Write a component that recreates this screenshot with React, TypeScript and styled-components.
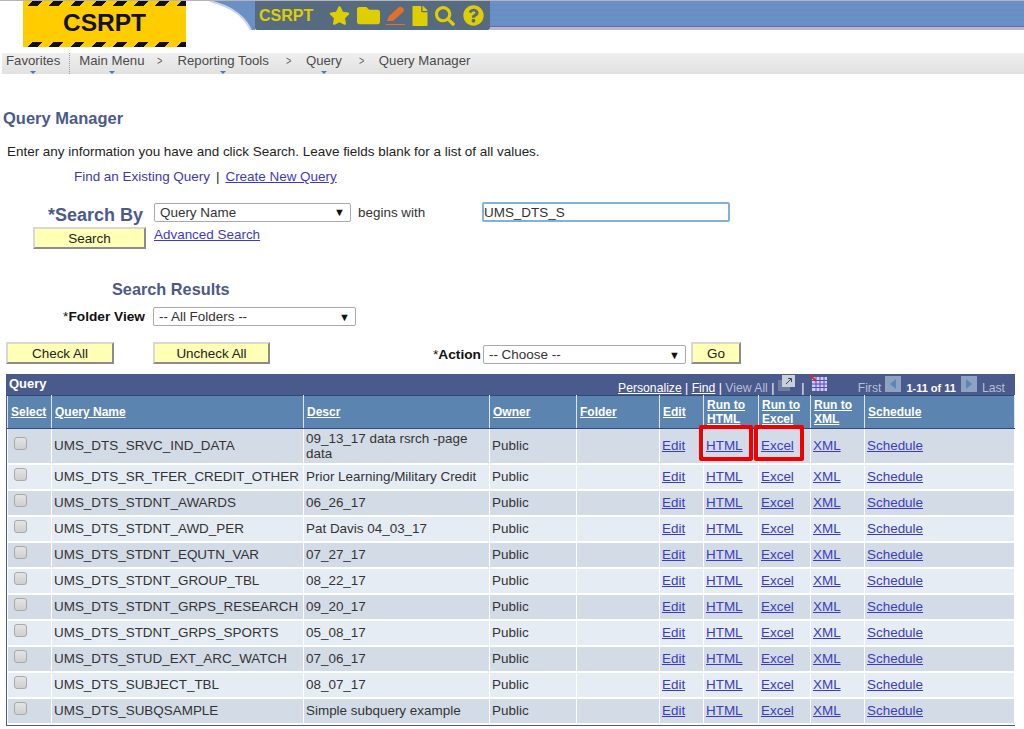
import styled, { createGlobalStyle } from "styled-components";
import { FaStar, FaFolder, FaFile, FaSearch, FaQuestionCircle } from "react-icons/fa";

const GlobalStyle = createGlobalStyle`
  html, body {
    margin: 0;
    padding: 0;
    background: #fff;
    font-family: "Liberation Sans", Arial, sans-serif;
    font-size: 13.45px;
    color: #333;
  }
`;

const Page = styled.div`
  width: 1024px;
  height: 729px;
  overflow: hidden;
  border-top: 1px solid #b5b5b5;
  box-sizing: border-box;
`;

/* banner */
const Header = styled.header`
  display: flex;
  align-items: flex-start;
  height: 46px;
  padding-left: 23px;
`;

const Logo = styled.div`
  display: flex;
  flex-direction: column;
  justify-content: space-between;
  width: 163px;
  height: 46px;
  background: #ffcc00;
`;

const HazardStrip = styled.div`
  height: 5px;
  background: repeating-linear-gradient(-45deg, #111 0 7px, #ffcc00 7px 15px);
`;

const LogoText = styled.div`
  margin-top: -2px;
  font-size: 24.5px;
  line-height: 30px;
  font-weight: 700;
  color: #111;
  text-align: center;
`;

const Swoosh = styled.svg`
  display: block;
  flex: none;
  width: 69px;
  height: 29px;
`;

const Toolbar = styled.div`
  display: flex;
  align-items: center;
  flex: none;
  width: 235px;
  height: 29px;
  box-sizing: border-box;
  padding-left: 4px;
  background: #566b80;
  border-radius: 0 0 2px 2px;
  color: #dfcf00;
`;

const ToolbarTitle = styled.span`
  width: 67px;
  font-size: 16px;
  font-weight: 700;
`;

const ToolIcon = styled.span<{ $w: number }>`
  display: flex;
  align-items: center;
  justify-content: center;
  width: ${(p) => p.$w}px;
  color: #dfcf00;
`;

const BannerFill = styled.div`
  flex: 1;
  height: 29px;
  box-sizing: border-box;
  border-bottom: 3px solid #b9b9c4;
  background: repeating-linear-gradient(180deg, #6b90c6 0 3px, #688dc3 3px 5px);
  box-shadow: inset 0 -1px 0 #6a66b8;
`;

/* breadcrumb */
const NavBar = styled.nav`
  display: flex;
  align-items: flex-start;
  height: 21px;
  margin: 6px 0 0 2px;
  padding-left: 4px;
  background: linear-gradient(180deg, #efefef, #e1e1e1);
  font-size: 13.2px;
  line-height: 16px;
  color: #4a4a4a;
`;

const NavItem = styled.span<{ $caret?: boolean; $gap: number }>`
  position: relative;
  height: 21px;
  margin-right: ${(p) => p.$gap}px;

  &::after {
    content: "";
    display: ${(p) => (p.$caret ? "block" : "none")};
    position: absolute;
    left: 50%;
    bottom: 0;
    margin-left: -3px;
    border: 3px solid transparent;
    border-bottom: 0;
    border-top: 3px solid #3f7cc0;
  }
`;

const NavRule = styled.span`
  width: 0;
  height: 21px;
  margin-right: 9px;
  border-left: 1px dotted #9a9a9a;
`;

const NavSep = styled.span`
  width: 6px;
  margin: 0 15px 0 12px;
  font-size: 13px;
  color: #666;
  transform: scaleX(0.7);
`;

/* search form */
const PageTitle = styled.h1`
  margin: 35px 0 0 3px;
  font-size: 16.5px;
  line-height: 18px;
  font-weight: 700;
  color: #4b5a88;
`;

const Intro = styled.p`
  margin: 16px 0 0 7px;
  font-size: 13.45px;
  line-height: 17px;
  color: #222;
`;

const TabLinks = styled.div`
  display: flex;
  gap: 6px;
  margin: 8px 0 0 74px;
  line-height: 17px;
`;

const PlainTab = styled.span`
  color: #3a3aa8;
`;

const Pipe = styled.span`
  color: #222;
`;

const Link = styled.a`
  color: #3b3bc0;
  text-decoration: underline;
  cursor: pointer;
`;

const SearchGrid = styled.div`
  display: grid;
  grid-template-columns: 121px 197px 131px 248px;
  grid-template-rows: 20px 27px;
  align-items: center;
  margin: 17px 0 0 33px;
`;

const SearchLabel = styled.div`
  padding: 6px 11px 0 0;
  font-size: 18px;
  line-height: 18px;
  font-weight: 700;
  color: #4b5a88;
  text-align: right;
`;

const Select = styled.div<{ $w: number }>`
  display: flex;
  align-items: center;
  justify-content: space-between;
  width: ${(p) => p.$w}px;
  height: 19px;
  box-sizing: border-box;
  padding: 0 5px;
  background: #fff;
  border: 1px solid #a9a9a9;
  border-radius: 2px;
  font-size: 13.45px;
  color: #333;

  &::after {
    content: "▼";
    font-size: 11px;
    color: #111;
  }
`;

const BeginsWith = styled.span`
  padding-left: 7px;
  color: #333;
`;

const TextInput = styled.input`
  width: 248px;
  height: 20px;
  box-sizing: border-box;
  padding: 0;
  border: 2px solid #7fb2dd;
  border-radius: 2px;
  outline: none;
  font-family: inherit;
  font-size: 13.45px;
  color: #333;
`;

const Button = styled.button<{ $w: number }>`
  width: ${(p) => p.$w}px;
  height: 22px;
  padding: 0;
  background: #ffffb5;
  border: 2px solid;
  border-color: #d8d8d8 #8c8c8c #8c8c8c #d8d8d8;
  font-family: inherit;
  font-size: 13.45px;
  color: #222;
`;

const SearchButton = styled(Button)`
  align-self: end;
`;

const AdvancedLink = styled(Link)`
  grid-column: 2 / 4;
  align-self: start;
  margin-top: 4px;
  line-height: 17px;
`;

const ResultsTitle = styled.h2`
  margin: 31px 0 0 112px;
  font-size: 16.3px;
  line-height: 18px;
  font-weight: 700;
  color: #4b5a88;
`;

const FolderRow = styled.div`
  display: grid;
  grid-template-columns: 145px 203px;
  column-gap: 8px;
  align-items: center;
  margin-top: 9px;
`;

const FieldLabel = styled.label`
  font-size: 13.7px;
  font-weight: 700;
  color: #111;
  text-align: right;
`;

const Req = styled.span`
  font-weight: 400;
`;

const ActionRow = styled.div`
  display: flex;
  align-items: flex-start;
  margin: 16px 0 0 6px;
`;

const CheckAllWrap = styled.div`
  width: 147px;
`;

const UncheckWrap = styled.div`
  width: 280px;
`;

const ActionField = styled.div`
  display: flex;
  align-items: center;
  gap: 2px;
  margin: 3px 5px 0 0;
`;

/* grid */
const GridBox = styled.div`
  width: 1009px;
  margin: 10px 0 0 6px;
  box-sizing: border-box;
  background: #4a5a8c;
  border: 1px solid #4a5a8c;
  border-top: 0;
`;

const GridCaption = styled.div`
  display: flex;
  align-items: flex-start;
  justify-content: space-between;
  height: 21px;
  padding: 0 9px 0 2px;
  color: #fff;
`;

const CaptionTitle = styled.span`
  font-size: 13px;
  line-height: 20px;
  font-weight: 700;
`;

const CaptionTools = styled.div`
  display: flex;
  align-items: center;
  height: 21px;
  padding-top: 7px;
  box-sizing: border-box;
  font-size: 12.2px;
  color: #fff;
`;

const ToolLink = styled.span`
  text-decoration: underline;
`;

const ToolText = styled.span<{ $dim?: boolean; $bold?: boolean; $gap?: number }>`
  margin-left: ${(p) => p.$gap ?? 0}px;
  font-weight: ${(p) => (p.$bold ? 700 : 400)};
  font-size: ${(p) => (p.$bold ? "11px" : "inherit")};
  color: ${(p) => (p.$dim ? "#b6bfd6" : "#fff")};
  white-space: pre;
`;

const NavSquare = styled.span<{ $dir: "l" | "r"; $gap: number }>`
  display: flex;
  align-items: center;
  justify-content: center;
  width: 16px;
  height: 16px;
  margin: -8px 5px 0 ${(p) => p.$gap}px;
  background: #8ea3c4;

  &::after {
    content: "";
    border: 5px solid transparent;
    ${(p) => (p.$dir === "l" ? "border-left: 0; border-right: 6px solid #5d86b4;" : "border-right: 0; border-left: 6px solid #5d86b4;")}
  }
`;

const ToolGlyph = styled.svg<{ $left?: number }>`
  display: block;
  margin: -10px 0 0 ${(p) => p.$left ?? 0}px;
`;

const Table = styled.table`
  width: 1007px;
  table-layout: fixed;
  border-collapse: collapse;
  font-size: 13.45px;
`;

const HeadCell = styled.th`
  height: 33px;
  padding: 0 0 0 3px;
  box-sizing: border-box;
  background: #5b84b1;
  border: 1px solid;
  border-color: #2f4a78 #dfe5ef #2f4a78 #dfe5ef;
  font-size: 12px;
  line-height: 14px;
  font-weight: 700;
  color: #fff;
  text-align: left;
  text-decoration: underline;
`;

const Row = styled.tr<{ $odd: boolean }>`
  background: ${(p) => (p.$odd ? "#d3dbe7" : "#e6ecf3")};
`;

const Cell = styled.td<{ $tall?: boolean }>`
  position: relative;
  height: ${(p) => (p.$tall ? 35 : 26)}px;
  padding: 0 0 0 2px;
  box-sizing: border-box;
  border: 2px solid #fff;
  border-width: 0 1px 2px 1px;
  font-size: 13.45px;
  line-height: 15px;
  color: #333;
`;

const CheckCell = styled(Cell)`
  padding: 0 0 4px 6px;
`;

const Check = styled.input.attrs({ type: "checkbox" })`
  appearance: none;
  display: block;
  width: 13px;
  height: 13px;
  margin: 0;
  background: linear-gradient(180deg, #e4e4e4, #cfcfcf);
  border: 1px solid #a8a8a8;
  border-radius: 3px;
`;

const Callout = styled.span<{ $w: number; $left: number }>`
  position: absolute;
  top: -4px;
  left: ${(p) => p.$left}px;
  width: ${(p) => p.$w}px;
  height: 36px;
  box-sizing: border-box;
  border: 4px solid #f00000;
  border-radius: 2px;
  pointer-events: none;
`;

const rows = [
  ["UMS_DTS_SRVC_IND_DATA", "09_13_17 data rsrch -page data"],
  ["UMS_DTS_SR_TFER_CREDIT_OTHER", "Prior Learning/Military Credit"],
  ["UMS_DTS_STDNT_AWARDS", "06_26_17"],
  ["UMS_DTS_STDNT_AWD_PER", "Pat Davis 04_03_17"],
  ["UMS_DTS_STDNT_EQUTN_VAR", "07_27_17"],
  ["UMS_DTS_STDNT_GROUP_TBL", "08_22_17"],
  ["UMS_DTS_STDNT_GRPS_RESEARCH", "09_20_17"],
  ["UMS_DTS_STDNT_GRPS_SPORTS", "05_08_17"],
  ["UMS_DTS_STUD_EXT_ARC_WATCH", "07_06_17"],
  ["UMS_DTS_SUBJECT_TBL", "08_07_17"],
  ["UMS_DTS_SUBQSAMPLE", "Simple subquery example"],
];

const columns: [string, number][] = [
  ["Select", 44],
  ["Query Name", 252],
  ["Descr", 186],
  ["Owner", 87],
  ["Folder", 83],
  ["Edit", 44],
  ["Run to HTML", 55],
  ["Run to Excel", 52],
  ["Run to XML", 54],
  ["Schedule", 150],
];

export default function App() {
  return (
    <Page>
      <GlobalStyle />
      <Header>
        <Logo>
          <HazardStrip />
          <LogoText>CSRPT</LogoText>
          <HazardStrip />
        </Logo>
        <Swoosh viewBox="0 0 69 29">
          <path d="M24 0 C38 4 56 10 65 29 L69 29 L69 0 Z" fill="#6b90c6" />
          <path d="M24 0 C38 4 56 10 65 29" stroke="#c9d2e6" strokeWidth="2" fill="none" />
        </Swoosh>
        <Toolbar>
          <ToolbarTitle>CSRPT</ToolbarTitle>
          <ToolIcon $w={26}><FaStar size={21} /></ToolIcon>
          <ToolIcon $w={32}><FaFolder size={23} /></ToolIcon>
          <ToolIcon $w={24}>
            <svg width="20" height="20" viewBox="0 0 20 20">
              <path d="M1 15 L3 10 L13 1 Q15 0 17 2 Q19 4 17 6 L7 15 Z" fill="#e0702a" />
              <rect x="0" y="18" width="19" height="1" fill="#e0702a" />
            </svg>
          </ToolIcon>
          <ToolIcon $w={24}><FaFile size={20} /></ToolIcon>
          <ToolIcon $w={26}><FaSearch size={20} /></ToolIcon>
          <ToolIcon $w={30}><FaQuestionCircle size={21} /></ToolIcon>
        </Toolbar>
        <BannerFill />
      </Header>

      <NavBar>
        <NavItem $caret $gap={9}>Favorites</NavItem>
        <NavRule />
        <NavItem $caret $gap={0}>Main Menu</NavItem>
        <NavSep>&gt;</NavSep>
        <NavItem $caret $gap={4}>Reporting Tools</NavItem>
        <NavSep>&gt;</NavSep>
        <NavItem $caret $gap={4}>Query</NavItem>
        <NavSep>&gt;</NavSep>
        <NavItem $gap={0}>Query Manager</NavItem>
      </NavBar>

      <PageTitle>Query Manager</PageTitle>
      <Intro>Enter any information you have and click Search. Leave fields blank for a list of all values.</Intro>
      <TabLinks>
        <PlainTab>Find an Existing Query</PlainTab>
        <Pipe>|</Pipe>
        <Link>Create New Query</Link>
      </TabLinks>

      <SearchGrid>
        <SearchLabel>*Search By</SearchLabel>
        <Select $w={197}>Query Name</Select>
        <BeginsWith>begins with</BeginsWith>
        <TextInput defaultValue="UMS_DTS_S" />
        <SearchButton $w={113}>Search</SearchButton>
        <AdvancedLink>Advanced Search</AdvancedLink>
      </SearchGrid>

      <ResultsTitle>Search Results</ResultsTitle>
      <FolderRow>
        <FieldLabel><Req>*</Req>Folder View</FieldLabel>
        <Select $w={203}>-- All Folders --</Select>
      </FolderRow>

      <ActionRow>
        <CheckAllWrap><Button $w={108}>Check All</Button></CheckAllWrap>
        <UncheckWrap><Button $w={117}>Uncheck All</Button></UncheckWrap>
        <ActionField>
          <FieldLabel><Req>*</Req>Action</FieldLabel>
          <Select $w={203}>-- Choose --</Select>
        </ActionField>
        <Button $w={50}>Go</Button>
      </ActionRow>

      <GridBox>
        <GridCaption>
          <CaptionTitle>Query</CaptionTitle>
          <CaptionTools>
            <ToolLink>Personalize</ToolLink>
            <ToolText> | </ToolText>
            <ToolLink>Find</ToolLink>
            <ToolText> | </ToolText>
            <ToolText $dim>View All</ToolText>
            <ToolText> | </ToolText>
            <ToolGlyph width="17" height="16" viewBox="0 0 17 16">
              <rect x="0" y="5" width="12" height="11" fill="#6f7f9f" />
              <rect x="4" y="0" width="13" height="12" fill="#c9cfdc" />
              <path d="M8 9 L13 4 M10 3.5 h3.5 v3.5" stroke="#3b4660" fill="none" />
            </ToolGlyph>
            <ToolText $gap={3}> | </ToolText>
            <ToolGlyph $left={2} width="17" height="16" viewBox="0 0 17 16">
              <rect x="2" y="2" width="15" height="14" fill="#c9cfee" />
              <path d="M2 5.5h15M2 9h15M2 12.5h15M6 2v14M10 2v14M14 2v14" stroke="#5a48c0" />
              <path d="M0 0 L6 6" stroke="#d8262c" strokeWidth="2" />
            </ToolGlyph>
            <ToolText $dim $gap={31}>First</ToolText>
            <NavSquare $dir="l" $gap={4} />
            <ToolText $bold>1-11 of 11</ToolText>
            <NavSquare $dir="r" $gap={5} />
            <ToolText $dim>Last</ToolText>
          </CaptionTools>
        </GridCaption>
        <Table>
          <colgroup>
            {columns.map(([name, w]) => <col key={name} width={w} />)}
          </colgroup>
          <thead>
            <tr>
              {columns.map(([name]) => <HeadCell key={name}>{name}</HeadCell>)}
            </tr>
          </thead>
          <tbody>
            {rows.map(([name, descr], i) => (
              <Row key={name} $odd={i % 2 === 0}>
                <CheckCell $tall={i === 0}><Check /></CheckCell>
                <Cell>{name}</Cell>
                <Cell>{descr}</Cell>
                <Cell>Public</Cell>
                <Cell />
                <Cell><Link>Edit</Link></Cell>
                <Cell>
                  <Link>HTML</Link>
                  {i === 0 && <Callout $w={54} $left={-5} />}
                </Cell>
                <Cell>
                  <Link>Excel</Link>
                  {i === 0 && <Callout $w={50} $left={-5} />}
                </Cell>
                <Cell><Link>XML</Link></Cell>
                <Cell><Link>Schedule</Link></Cell>
              </Row>
            ))}
          </tbody>
        </Table>
      </GridBox>
    </Page>
  );
}
